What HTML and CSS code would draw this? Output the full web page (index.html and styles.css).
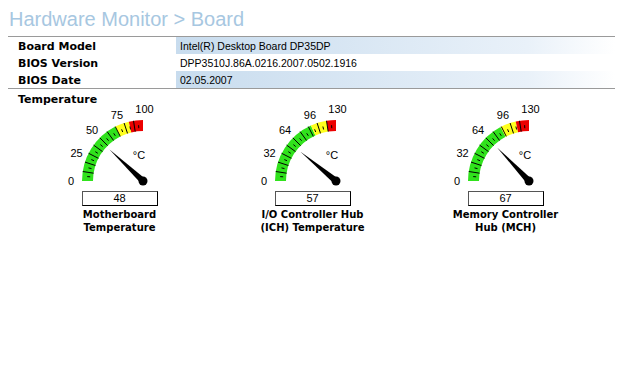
FILE: index.html
```html
<!DOCTYPE html>
<html lang="en">
<head>
    <meta charset="UTF-8">
    <title>Hardware Monitor - Board</title>
    <link rel="stylesheet" href="styles.css">
</head>
<body>

    <h1 class="title">Hardware Monitor &gt; Board</h1>

    <div class="info">
        <div class="row shade">
            <div class="key">Board Model</div>
            <div class="val">Intel(R) Desktop Board DP35DP</div>
        </div>
        <div class="row">
            <div class="key">BIOS Version</div>
            <div class="val">DPP3510J.86A.0216.2007.0502.1916</div>
        </div>
        <div class="row shade">
            <div class="key">BIOS Date</div>
            <div class="val">02.05.2007</div>
        </div>
    </div>

    <div class="section">Temperature</div>

    <div class="gauges">
        <div class="gauge">
            <svg class="dial" id="dial0" viewBox="0 0 193 84"></svg>
            <div class="readout">48</div>
            <div class="caption">Motherboard<br>Temperature</div>
        </div>
        <div class="gauge">
            <svg class="dial" id="dial1" viewBox="0 0 193 84"></svg>
            <div class="readout">57</div>
            <div class="caption">I/O Controller Hub<br>(ICH) Temperature</div>
        </div>
        <div class="gauge">
            <svg class="dial" id="dial2" viewBox="0 0 193 84"></svg>
            <div class="readout">67</div>
            <div class="caption">Memory Controller<br>Hub (MCH)</div>
        </div>
    </div>

    <script>
        const gauges = [
            { max: 100, labels: [0, 25, 50, 75, 100], value: 48, warn: 0.70, crit: 0.85 },
            { max: 130, labels: [0, 32, 64, 96, 130], value: 57, warn: 0.73, crit: 0.90 },
            { max: 130, labels: [0, 32, 64, 96, 130], value: 67, warn: 0.69, crit: 0.86 }
        ];

        const CX = 120, CY = 74, RO = 61, RI = 50;

        function pt(r, deg) {
            const a = deg * Math.PI / 180;
            return [(CX - r * Math.cos(a)).toFixed(1), (CY - r * Math.sin(a)).toFixed(1)];
        }

        function band(a, b, color) {
            const o1 = pt(RO, a), o2 = pt(RO, b), i2 = pt(RI, b), i1 = pt(RI, a);
            return `<path d="M${o1} A${RO} ${RO} 0 0 1 ${o2} L${i2} A${RI} ${RI} 0 0 0 ${i1}Z" fill="${color}"/>`;
        }

        function line(r1, r2, deg) {
            const p1 = pt(r1, deg), p2 = pt(r2, deg);
            return `<line x1="${p1[0]}" y1="${p1[1]}" x2="${p2[0]}" y2="${p2[1]}"/>`;
        }

        gauges.forEach((g, i) => {
            let svg = "";
            svg += band(0, g.warn * 90, "#30e21c");
            svg += band(g.warn * 90, g.crit * 90, "#ffff1e");
            svg += band(g.crit * 90, 90, "#ec0000");

            let ticks = "";
            for (let d = 9; d < 90; d += 9) ticks += line(RI, RO, d);
            for (let d = 4.5; d < 90; d += 9) ticks += line(RI + 3, RO - 5, d);
            svg += `<g class="ticks">${ticks}</g>`;

            g.labels.forEach((label, n) => {
                const p = pt(72, n * 22.5);
                svg += `<text x="${(+p[0] + (n > 2 ? 1.5 : 0)).toFixed(1)}" y="${p[1]}">${label}</text>`;
            });
            svg += `<text x="${CX - 4}" y="${CY - 26}">°C</text>`;

            // needle, widening toward the hub
            const deg = g.value / g.max * 90;
            const a = deg * Math.PI / 180;
            const tip = pt(46, deg);
            const px = 3.2 * Math.sin(a), py = -3.2 * Math.cos(a);
            svg += `<polygon class="needle" points="${tip} ${(CX + px).toFixed(1)},${(CY + py).toFixed(1)} ${(CX - px).toFixed(1)},${(CY - py).toFixed(1)}"/>`;
            svg += `<circle class="needle" cx="${CX}" cy="${CY}" r="4.5"/>`;

            document.getElementById("dial" + i).innerHTML = svg;
        });
    </script>

</body>
</html>
```

FILE: styles.css
```css
/* General Styling */
body {
    margin: 0;
    background: #ffffff;
    color: #000000;
    font-family: "Liberation Sans", Arial, sans-serif;
    font-size: 11px;
}

.title {
    margin: 0;
    padding: 8px 0 0 9px;
    font-size: 20px;
    font-weight: normal;
    line-height: 23px;
    color: #a7c7e1;
}

/* Board info */
.info {
    margin: 5px 0 0 8px;
    width: 607px;
    border-top: 1px solid #9a9a9a;
    border-bottom: 1px solid #9a9a9a;
}

.row {
    display: flex;
    height: 17px;
}

.key {
    width: 158px;
    padding: 2px 0 0 10px;
    font-family: "DejaVu Sans", Verdana, sans-serif;
    font-weight: bold;
    font-size: 11px;
    line-height: 15px;
}

.val {
    flex: 1;
    padding: 2px 0 0 4px;
    font-size: 10.5px;
    line-height: 15px;
}

.shade .val {
    background: linear-gradient(to right, #c8dcee, #e9f1f9 80%, #ffffff);
}

.section {
    padding: 3px 0 0 18px;
    font-family: "DejaVu Sans", Verdana, sans-serif;
    font-weight: bold;
    font-size: 11px;
    line-height: 15px;
}

/* Gauges */
.gauges {
    display: flex;
    padding-left: 23px;
}

.gauge {
    width: 193px;
    display: flex;
    flex-direction: column;
    align-items: center;
}

.dial {
    display: block;
    width: 193px;
    height: 84px;
    overflow: visible;
}

.dial text {
    font-family: "Liberation Sans", Arial, sans-serif;
    font-size: 11px;
    fill: #000000;
    text-anchor: middle;
    dominant-baseline: central;
}

.dial .ticks line {
    stroke: #000000;
    stroke-width: 1;
}

.dial .needle {
    fill: #000000;
}

.readout {
    width: 76px;
    height: 15px;
    box-sizing: border-box;
    border: 1px solid #000000;
    border-top-color: #555555;
    border-left-color: #555555;
    line-height: 13px;
    text-align: center;
}

.caption {
    margin-top: 2px;
    font-family: "DejaVu Sans", Verdana, sans-serif;
    font-weight: bold;
    font-size: 10px;
    line-height: 13px;
    text-align: center;
}
```
